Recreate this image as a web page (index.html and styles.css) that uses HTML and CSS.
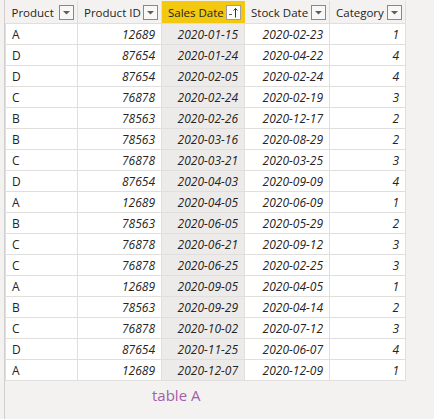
FILE: index.html
```html
<!DOCTYPE html>
<html>
<head>
<meta charset="utf-8">
<link rel="stylesheet" href="styles.css">
</head>
<body>
<div class="pane">
  <table class="grid">
    <colgroup>
      <col class="c1"><col class="c2"><col class="c3"><col class="c4"><col class="c5">
    </colgroup>
    <thead>
      <tr>
        <th><div class="hd"><span>Product</span><span class="fbox"><svg width="9" height="5" viewBox="0 0 9 5"><path d="M1 1h7L4.5 4.5z" fill="#605e5c"/></svg></span></div></th>
        <th><div class="hd"><span>Product ID</span><span class="fbox"><svg width="9" height="5" viewBox="0 0 9 5"><path d="M1 1h7L4.5 4.5z" fill="#605e5c"/></svg></span></div></th>
        <th class="sel"><div class="hd"><span>Sales Date</span><span class="fbox sort"><svg width="13" height="13" viewBox="0 0 13 13"><path d="M2 8.5h3" stroke="#605e5c" stroke-width="1"/><path d="M8.5 11.5V2.5M6.5 4.5l2-2 2 2" stroke="#323130" stroke-width="1" fill="none"/></svg></span></div></th>
        <th><div class="hd"><span>Stock Date</span><span class="fbox"><svg width="9" height="5" viewBox="0 0 9 5"><path d="M1 1h7L4.5 4.5z" fill="#605e5c"/></svg></span></div></th>
        <th><div class="hd"><span>Category</span><span class="fbox"><svg width="9" height="5" viewBox="0 0 9 5"><path d="M1 1h7L4.5 4.5z" fill="#605e5c"/></svg></span></div></th>
      </tr>
    </thead>
    <tbody>
      <tr><td>A</td><td class="n">12689</td><td class="n s">2020-01-15</td><td class="n">2020-02-23</td><td class="n">1</td></tr>
      <tr><td>D</td><td class="n">87654</td><td class="n s">2020-01-24</td><td class="n">2020-04-22</td><td class="n">4</td></tr>
      <tr><td>D</td><td class="n">87654</td><td class="n s">2020-02-05</td><td class="n">2020-02-24</td><td class="n">4</td></tr>
      <tr><td>C</td><td class="n">76878</td><td class="n s">2020-02-24</td><td class="n">2020-02-19</td><td class="n">3</td></tr>
      <tr><td>B</td><td class="n">78563</td><td class="n s">2020-02-26</td><td class="n">2020-12-17</td><td class="n">2</td></tr>
      <tr><td>B</td><td class="n">78563</td><td class="n s">2020-03-16</td><td class="n">2020-08-29</td><td class="n">2</td></tr>
      <tr><td>C</td><td class="n">76878</td><td class="n s">2020-03-21</td><td class="n">2020-03-25</td><td class="n">3</td></tr>
      <tr><td>D</td><td class="n">87654</td><td class="n s">2020-04-03</td><td class="n">2020-09-09</td><td class="n">4</td></tr>
      <tr><td>A</td><td class="n">12689</td><td class="n s">2020-04-05</td><td class="n">2020-06-09</td><td class="n">1</td></tr>
      <tr><td>B</td><td class="n">78563</td><td class="n s">2020-06-05</td><td class="n">2020-05-29</td><td class="n">2</td></tr>
      <tr><td>C</td><td class="n">76878</td><td class="n s">2020-06-21</td><td class="n">2020-09-12</td><td class="n">3</td></tr>
      <tr><td>C</td><td class="n">76878</td><td class="n s">2020-06-25</td><td class="n">2020-02-25</td><td class="n">3</td></tr>
      <tr><td>A</td><td class="n">12689</td><td class="n s">2020-09-05</td><td class="n">2020-04-05</td><td class="n">1</td></tr>
      <tr><td>B</td><td class="n">78563</td><td class="n s">2020-09-29</td><td class="n">2020-04-14</td><td class="n">2</td></tr>
      <tr><td>C</td><td class="n">76878</td><td class="n s">2020-10-02</td><td class="n">2020-07-12</td><td class="n">3</td></tr>
      <tr><td>D</td><td class="n">87654</td><td class="n s">2020-11-25</td><td class="n">2020-06-07</td><td class="n">4</td></tr>
      <tr><td>A</td><td class="n">12689</td><td class="n s">2020-12-07</td><td class="n">2020-12-09</td><td class="n">1</td></tr>
    </tbody>
  </table>
  <div class="caption">table A</div>
</div>
</body>
</html>
```

FILE: styles.css
```css
html, body {
  margin: 0;
  padding: 0;
  background: #f3f2f1;
  width: 434px;
  height: 419px;
  overflow: hidden;
}
.pane {
  margin-left: 4px;
  border-left: 1px solid #d2d0ce;
  height: 419px;
  padding-top: 1px;
  box-sizing: border-box;
  font-family: "Open Sans", "Noto Sans", sans-serif;
  font-size: 12px;
  color: #252423;
}
.grid {
  border-collapse: collapse;
  table-layout: fixed;
  width: 400px;
}
.c1 { width: 72px; }
.c2 { width: 84px; }
.c3 { width: 83px; }
.c4 { width: 85px; }
.c5 { width: 76px; }
th {
  height: 22px;
  padding: 0 3px 0 6px;
  background: #f3f2f1;
  border-right: 1px solid #e1dfdd;
  border-bottom: 1px solid #e1dfdd;
  font-weight: 400;
  font-size: 11.5px;
  text-align: left;
  color: #252423;
  white-space: nowrap;
}
th.sel {
  background: #f2c811;
  border-right-color: #f2c811;
}
.hd {
  display: flex;
  align-items: center;
  justify-content: space-between;
}
.fbox {
  width: 13px;
  height: 13px;
  border: 1px solid #8a8886;
  background: #f8f8f8;
  display: flex;
  align-items: center;
  justify-content: center;
  box-sizing: content-box;
  flex: none;
}
.fbox.sort {
  background: #fff;
  border-color: #a19f9d;
}
td {
  height: 20px;
  padding: 0 6px;
  background: #ffffff;
  border: 1px solid #e1dfdd;
  border-top: 0;
  white-space: nowrap;
  color: #252423;
}
td.n {
  text-align: right;
  font-style: italic;
}
td.s {
  background: #edebe9;
}
.caption {
  margin: 4px 0 0 147px;
  font-size: 15px;
  color: #a35ea9;
}
```
